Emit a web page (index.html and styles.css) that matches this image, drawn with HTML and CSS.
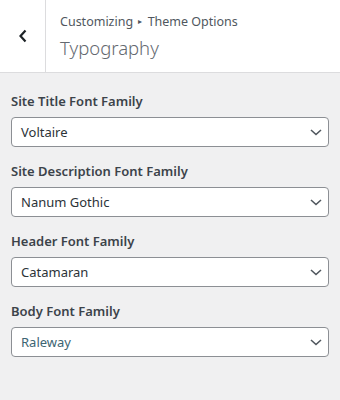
FILE: index.html
```html
<!DOCTYPE html>
<html lang="en">
<head>
  <meta charset="UTF-8">
  <meta name="viewport" content="width=device-width, initial-scale=1.0">
  <title>Typography</title>
  <link rel="stylesheet" href="styles.css">
</head>
<body>
  <header class="panel-head">
    <button class="back-btn" aria-label="Back">
      <svg width="10" height="14" viewBox="0 0 10 14"><path d="M7.5 1.5 L2.5 7 L7.5 12.5" fill="none" stroke="#1d2327" stroke-width="2.2"/></svg>
    </button>
    <div class="head-title">
      <div class="crumb">Customizing <span class="sep">&#9656;</span> Theme Options</div>
      <h1>Typography</h1>
    </div>
  </header>
  <main class="controls">
    <div class="control">
      <label>Site Title Font Family</label>
      <div class="select"><span>Voltaire</span><svg width="12" height="7" viewBox="0 0 12 7"><path d="M1 1 L6 5.5 L11 1" fill="none" stroke="#50575e" stroke-width="1.6"/></svg></div>
    </div>
    <div class="control">
      <label>Site Description Font Family</label>
      <div class="select"><span>Nanum Gothic</span><svg width="12" height="7" viewBox="0 0 12 7"><path d="M1 1 L6 5.5 L11 1" fill="none" stroke="#50575e" stroke-width="1.6"/></svg></div>
    </div>
    <div class="control">
      <label>Header Font Family</label>
      <div class="select"><span>Catamaran</span><svg width="12" height="7" viewBox="0 0 12 7"><path d="M1 1 L6 5.5 L11 1" fill="none" stroke="#50575e" stroke-width="1.6"/></svg></div>
    </div>
    <div class="control">
      <label>Body Font Family</label>
      <div class="select active"><span>Raleway</span><svg width="12" height="7" viewBox="0 0 12 7"><path d="M1 1 L6 5.5 L11 1" fill="none" stroke="#50575e" stroke-width="1.6"/></svg></div>
    </div>
  </main>
</body>
</html>
```
FILE: styles.css
```css
body {
  margin: 0;
  font-family: "Noto Sans", "Open Sans", sans-serif;
  background: #f0f0f1;
  color: #1d2327;
  height: 400px;
}

.panel-head {
  display: flex;
  height: 72px;
  background: #fff;
  border-bottom: 1px solid #dcdcde;
}

.back-btn {
  width: 46px;
  border: none;
  border-right: 1px solid #dcdcde;
  background: #fff;
  padding: 0;
  display: flex;
  align-items: center;
  justify-content: center;
}

.head-title {
  padding: 11px 14px;
}

.crumb {
  font-size: 12.5px;
  color: #50575e;
  line-height: 20px;
}

.sep {
  font-size: 8px;
  vertical-align: 2px;
  margin: 0 2px;
}

.head-title h1 {
  margin: 4px 0 0;
  font-size: 18.5px;
  font-weight: 300;
  color: #646970;
  line-height: 24px;
}

.controls {
  padding: 18px 11px 0 11px;
}

.control {
  margin-bottom: 14px;
}

.control label {
  display: block;
  font-size: 13px;
  font-weight: 600;
  color: #3c434a;
  line-height: 20px;
  margin-bottom: 6px;
}

.select {
  display: flex;
  align-items: center;
  justify-content: space-between;
  height: 28px;
  background: #fff;
  border: 1px solid #8c8f94;
  border-radius: 4px;
  padding: 0 6px 0 9px;
  font-size: 13px;
  color: #2c3338;
}

.select.active span {
  color: #3d6573;
}
```
